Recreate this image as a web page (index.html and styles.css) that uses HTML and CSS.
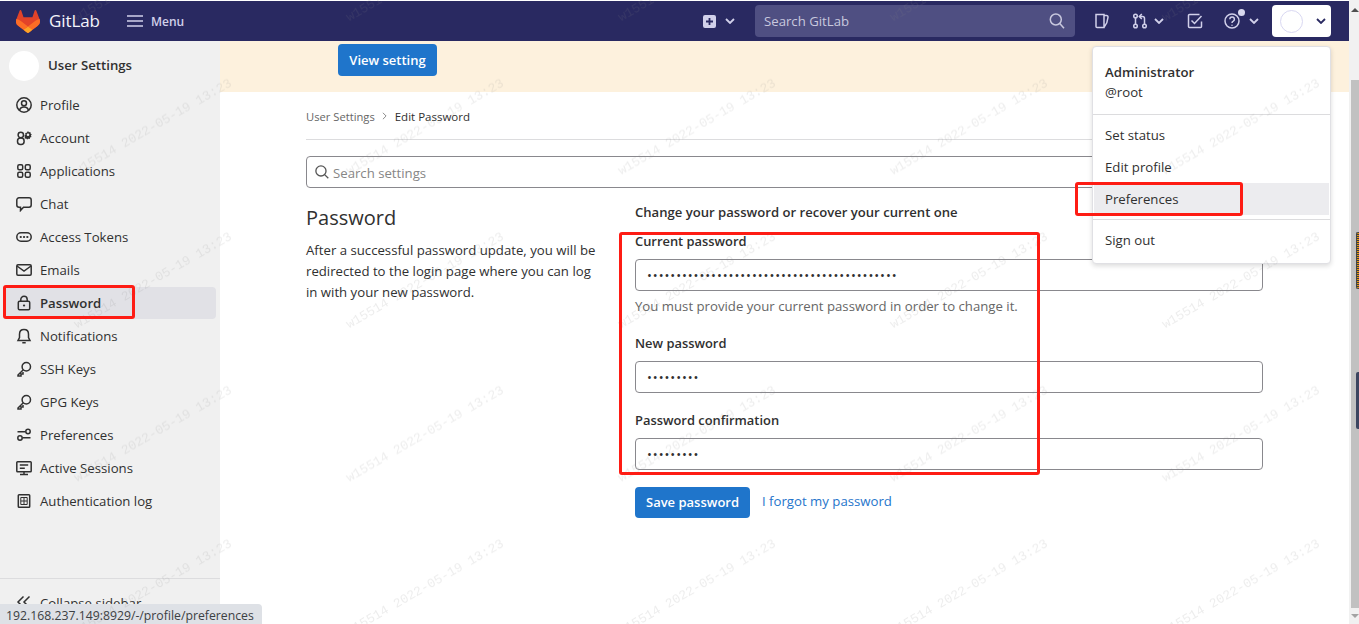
FILE: index.html
```html
<!DOCTYPE html>
<html lang="en">
<head>
<meta charset="utf-8">
<title>Edit Password · User Settings · GitLab</title>
<link rel="stylesheet" href="styles.css">
</head>
<body>
<div class="app">
  <div class="page">
    <header class="navbar">
      <div class="brand">
        <svg class="logo" viewBox="0 0 25 24"><path d="m24.507 9.5-.034-.09L21.082.562a.896.896 0 0 0-1.694.091l-2.29 7.01H7.825L5.535.653a.898.898 0 0 0-1.694-.09L.451 9.411.416 9.5a6.297 6.297 0 0 0 2.09 7.278l.012.01.03.022 5.16 3.867 2.56 1.935 1.554 1.176a1.051 1.051 0 0 0 1.268 0l1.555-1.176 2.56-1.935 5.197-3.89.014-.01A6.297 6.297 0 0 0 24.507 9.5Z" fill="#E24329"/><path d="M24.507 9.5l-.034-.09a11.44 11.44 0 0 0-4.56 2.051l-7.447 5.632 4.742 3.584 5.197-3.89.014-.01A6.297 6.297 0 0 0 24.507 9.5Z" fill="#FC6D26"/><path d="m7.707 20.677 2.56 1.935 1.555 1.176a1.051 1.051 0 0 0 1.268 0l1.555-1.176 2.56-1.935-4.743-3.584-4.755 3.584Z" fill="#FCA326"/><path d="M5.01 11.461a11.43 11.43 0 0 0-4.56-2.05L.416 9.5a6.297 6.297 0 0 0 2.09 7.278l.012.01.03.022 5.16 3.867 4.745-3.584-7.444-5.632Z" fill="#FC6D26"/></svg>
        <span class="wordmark">GitLab</span>
      </div>
      <div class="menu-btn">
        <svg class="ico" viewBox="0 0 16 16"><path d="M0 3h16M0 8h16M0 13h16"/></svg>
        <span>Menu</span>
      </div>
      <div class="nav-spacer"></div>
      <div class="nav-new">
        <svg class="ico-13" viewBox="0 0 13 13"><path class="solid" d="M2 0h9a2 2 0 0 1 2 2v9a2 2 0 0 1-2 2H2a2 2 0 0 1-2-2V2a2 2 0 0 1 2-2Zm3.600 3v2.600H3v1.800h2.600V10h1.800V7.400H10V5.600H7.400V3Z"/></svg>
        <svg class="chev" viewBox="0 0 10 6"><path d="M1 1l4 4 4-4"/></svg>
      </div>
      <div class="nav-search">
        <span>Search GitLab</span>
        <svg class="ico" viewBox="0 0 16 16"><circle cx="6.800" cy="6.500" r="5.500"/><path d="M10.800 10.500l4.200 4.800"/></svg>
      </div>
      <div class="nav-icons">
        <svg class="ico nav-issue" viewBox="0 0 16 16"><path d="M2 1.500h8v13H3a1 1 0 0 1-1-1ZM10 2.500h2.500a1.500 1.500 0 0 1 1.500 1.800l-1.200 5.500-2.800 4.500"/></svg>
        <div class="nav-mr">
          <svg class="ico" viewBox="0 0 16 16"><circle cx="3.500" cy="3" r="1.800"/><circle cx="3.500" cy="13" r="1.800"/><circle cx="12.500" cy="13" r="1.800"/><path d="M3.500 5v6M12.500 11V5.500a2 2 0 0 0-2-2H8M9.800 1L7.300 3.500 9.800 6"/></svg>
          <svg class="chev" viewBox="0 0 10 6"><path d="M1 1l4 4 4-4"/></svg>
        </div>
        <svg class="ico nav-todo" viewBox="0 0 16 16"><path d="M14.500 8.500v5a1 1 0 0 1-1 1h-11a1 1 0 0 1-1-1v-11a1 1 0 0 1 1-1h10"/><path d="M4.500 7.500l3 3 7-7.500"/></svg>
        <div class="nav-help">
          <svg class="ico" viewBox="0 0 16 16"><circle cx="8" cy="8" r="7"/><path d="M5.800 6.200a2.300 2.300 0 1 1 3.500 2c-.9.5-1.300 1-1.300 1.800"/><path d="M8 11.800v1"/></svg>
          <span class="help-dot"></span>
          <svg class="chev" viewBox="0 0 10 6"><path d="M1 1l4 4 4-4"/></svg>
        </div>
      </div>
      <div class="nav-user">
        <span class="nav-avatar"></span>
        <svg class="chev" viewBox="0 0 10 6"><path d="M1 1l4 4 4-4"/></svg>
      </div>
    </header>

    <div class="body">
      <aside class="sidebar">
        <div class="side-head"><span class="side-avatar"></span><span class="side-title">User Settings</span></div>
        <nav class="side-list">
          <a class="side-item"><svg class="ico" viewBox="0 0 16 16"><circle cx="8" cy="8" r="7.200"/><circle cx="8" cy="6.200" r="2.500"/><path d="M3.500 13.500c.5-2.500 2.200-3.500 4.500-3.500s4 1 4.500 3.500"/></svg><span>Profile</span></a>
          <a class="side-item"><svg class="ico" viewBox="0 0 16 16"><circle cx="4.800" cy="5" r="2.700"/><rect x="1.500" y="8" width="6.600" height="6.500" rx="3"/><path class="solid-path" d="M12 1l.9 1.200 1.500-.2.200 1.500 1.200.9-.9 1.100.6 1.400-1.400.6-.3 1.500-1.500-.3-1.100.9-1.100-1.100-1.400.2.100-1.500L8.500 5.500l1-1.100-.3-1.500 1.500-.2ZM12 3.500a1.300 1.300 0 1 0 0 2.600 1.300 1.300 0 0 0 0-2.600Z"/></svg><span>Account</span></a>
          <a class="side-item"><svg class="ico" viewBox="0 0 16 16"><rect x="1.800" y="1.800" width="4.900" height="4.900" rx="1.500"/><rect x="9.300" y="1.800" width="4.900" height="4.900" rx="1.500"/><rect x="1.800" y="9.300" width="4.900" height="4.900" rx="1.500"/><rect x="9.300" y="9.300" width="4.900" height="4.900" rx="1.500"/></svg><span>Applications</span></a>
          <a class="side-item"><svg class="ico" viewBox="0 0 16 16"><path d="M3 1.800h10a2.200 2.200 0 0 1 2.200 2.200v5A2.200 2.200 0 0 1 13 11.200H7.500L4.500 14.500v-3.300H3A2.200 2.200 0 0 1 .8 9V4A2.200 2.200 0 0 1 3 1.800Z"/></svg><span>Chat</span></a>
          <a class="side-item"><svg class="ico" viewBox="0 0 16 16"><rect x=".8" y="3.800" width="14.400" height="8.400" rx="4.200"/><path class="dots" d="M4.700 8h.1M8 8h.1M11.300 8h.1"/></svg><span>Access Tokens</span></a>
          <a class="side-item"><svg class="ico" viewBox="0 0 16 16"><rect x=".8" y="2.800" width="14.400" height="10.400" rx="1.200"/><path d="M1 4l7 5 7-5"/></svg><span>Emails</span></a>
          <a class="side-item active"><svg class="ico" viewBox="0 0 16 16"><rect x="2.300" y="6.300" width="11.400" height="8.400" rx="1.200"/><path d="M4.800 6V4.500a3.200 3.200 0 0 1 6.400 0V6"/><path class="dots" d="M8 10.500h.1"/></svg><span>Password</span></a>
          <a class="side-item"><svg class="ico" viewBox="0 0 16 16"><path d="M8 1.500c-2.800 0-4.500 2-4.500 4.700v3.300L2 12.500h12l-1.500-3V6.200c0-2.700-1.700-4.700-4.500-4.700ZM6.300 14.800h3.400"/></svg><span>Notifications</span></a>
          <a class="side-item"><svg class="ico" viewBox="0 0 16 16"><circle cx="10.300" cy="5.700" r="4.200"/><path d="M7.300 8.700L2 14v1h3v-2h2v-2"/></svg><span>SSH Keys</span></a>
          <a class="side-item"><svg class="ico" viewBox="0 0 16 16"><circle cx="10.300" cy="5.700" r="4.200"/><path d="M7.300 8.700L2 14v1h3v-2h2v-2"/></svg><span>GPG Keys</span></a>
          <a class="side-item"><svg class="ico" viewBox="0 0 16 16"><circle cx="12" cy="4.500" r="2.200"/><circle cx="4" cy="11" r="2.200"/><path d="M1.500 4.800h8M6.500 10.800h8"/></svg><span>Preferences</span></a>
          <a class="side-item"><svg class="ico" viewBox="0 0 16 16"><rect x=".8" y="1.800" width="14.400" height="10" rx=".8"/><path d="M3.800 5h8.400M3.800 8.200h5M8 12v2.500M4 14.500h8"/></svg><span>Active Sessions</span></a>
          <a class="side-item"><svg class="ico" viewBox="0 0 16 16"><rect x="2.300" y="1.800" width="11.400" height="12.400" rx=".8"/><path class="thin" d="M4.800 4.500h6.400v7H4.800ZM8 4.500v7M4.800 8h6.400"/></svg><span>Authentication log</span></a>
        </nav>
        <div class="side-collapse"><svg class="ico" viewBox="0 0 16 16"><path d="M7.500 2.500L2 8l5.500 5.500M13.500 2.500L8 8l5.500 5.500"/></svg><span>Collapse sidebar</span></div>
      </aside>

      <main class="main">
        <div class="banner"><button class="btn banner-btn">View setting</button></div>
        <div class="content">
          <div class="crumbs"><span class="crumb-link">User Settings</span><svg class="crumb-sep" viewBox="0 0 6 10"><path d="M1 1l4 4-4 4"/></svg><span class="crumb-here">Edit Password</span></div>
          <div class="settings-search">
            <svg class="ico" viewBox="0 0 16 16"><circle cx="6.800" cy="6.800" r="5.800"/><path d="M11 11l4.200 4.200"/></svg>
            <span>Search settings</span>
          </div>
          <div class="columns">
            <section class="intro">
              <h1>Password</h1>
              <p>After a successful password update, you will be redirected to the login page where you can log in with your new password.</p>
            </section>
            <form class="pw-form">
              <h2>Change your password or recover your current one</h2>
              <label class="lab lab-first">Current password</label>
              <input class="field" type="password" value="0123456789012345678901234567890123456789012">
              <p class="hint">You must provide your current password in order to change it.</p>
              <label class="lab lab-new">New password</label>
              <input class="field" type="password" value="012345678">
              <label class="lab lab-confirm">Password confirmation</label>
              <input class="field" type="password" value="012345678">
              <div class="actions">
                <button type="button" class="btn save-btn">Save password</button>
                <a class="forgot">I forgot my password</a>
              </div>
            </form>
          </div>
        </div>
      </main>
    </div>
  </div>

  <div class="scrollbar">
    <span class="arrow-up"></span>
    <div class="thumb"></div>
    <span class="arrow-down"></span>
    <span class="mark mark-orange"></span>
    <span class="mark mark-navy"></span>
  </div>

  <div class="dropdown">
    <div class="dd-user"><strong>Administrator</strong><span>@root</span></div>
    <div class="dd-group">
      <a class="dd-item">Set status</a>
      <a class="dd-item">Edit profile</a>
      <a class="dd-item dd-hover">Preferences</a>
    </div>
    <div class="dd-out"><a class="dd-item">Sign out</a></div>
  </div>

  <div class="status">192.168.237.149:8929/-/profile/preferences</div>

  <svg class="watermark" width="1359" height="624">
    <defs>
      <pattern id="wm" x="0" y="0" width="272" height="153.500" patternUnits="userSpaceOnUse">
        <text x="77" y="175" transform="rotate(-30 77 175)">w15514 2022-05-19 13:23</text>
        <text x="77" y="21.500" transform="rotate(-30 77 21.500)">w15514 2022-05-19 13:23</text>
      </pattern>
    </defs>
    <rect width="1349" height="624" fill="url(#wm)"/>
  </svg>

  <div class="mark-box box-side"></div>
  <div class="mark-box box-form"></div>
  <div class="mark-box box-pref"></div>
</div>
</body>
</html>
```
FILE: styles.css
```css
* { box-sizing: border-box; }
html, body { margin: 0; padding: 0; height: 100%; overflow: hidden; }
body { font-family: "Open Sans", "Liberation Sans", sans-serif; font-size: 13.2px; color: #303030; background: #fff; }
.app { position: relative; width: 1359px; height: 624px; display: flex; overflow: hidden; }
.page { flex: 1; display: flex; flex-direction: column; min-width: 0; }

svg { display: block; flex: none; }
.ico, .ico-13, .chev, .crumb-sep { fill: none; stroke: currentColor; stroke-width: 1.5; }
.ico { width: 16px; height: 16px; }
.ico-13 { width: 13px; height: 13px; stroke: none; }
.solid { fill: #d1d0ea; fill-rule: evenodd; }
.solid-path { fill: currentColor; stroke: none; fill-rule: evenodd; }
.dots { stroke-width: 2.200; stroke-linecap: round; }
.thin { stroke-width: 1; }
.chev { width: 10px; height: 6px; stroke-width: 1.800; }

.navbar { height: 40px; margin-top: 1px; flex: none; background: #292961; color: #d1d0ea; display: flex; align-items: center; }
.brand { display: flex; align-items: center; margin-left: 16px; width: 111px; }
.logo { width: 24px; height: 23px; }
.wordmark { margin-left: 9px; font-size: 17px; line-height: 20px; color: #f4f4fa; letter-spacing: -.1px; }
.menu-btn { display: flex; align-items: center; gap: 8px; font-size: 12px; font-weight: 600; }
.nav-spacer { flex: 1; }
.nav-new { display: flex; align-items: center; gap: 9px; margin-right: 20px; }
.nav-search { width: 320px; height: 32px; background: #4f4f82; border-radius: 4px; display: flex; align-items: center; justify-content: space-between; padding: 0 10px 0 9px; color: #c8c8de; }
.nav-icons { display: flex; align-items: center; margin-left: 19px; width: 178px; }
.nav-issue { margin-right: 22px; }
.nav-mr { display: flex; align-items: center; gap: 6px; margin-right: 23px; }
.nav-todo { margin-right: 21px; }
.nav-help { display: flex; align-items: center; gap: 9px; position: relative; }
.help-dot { position: absolute; left: 14px; top: -4px; width: 7px; height: 7px; border-radius: 50%; background: #d8d8ee; }
.nav-user { width: 59px; height: 32px; background: #fff; border-radius: 4px; display: flex; align-items: center; padding-left: 8px; gap: 13px; color: #292961; margin-right: 18px; }
.nav-avatar { width: 23px; height: 23px; border-radius: 50%; border: 1px solid #d9d8f2; }

.body { flex: 1; display: flex; min-height: 0; }
.sidebar { width: 220px; flex: none; background: #f0f0f0; display: flex; flex-direction: column; color: #303030; }
.side-head { height: 47px; margin-top: 1px; padding-left: 9px; display: flex; align-items: center; gap: 9px; font-weight: 600; }
.side-title { margin-bottom: 2px; }
.side-avatar { width: 30px; height: 30px; border-radius: 50%; background: #fff; }
.side-list { padding: 0 4px; flex: 1; display: flex; flex-direction: column; gap: 1px; margin-top: 0; }
.side-item { height: 32px; padding-left: 12px; display: flex; align-items: center; gap: 8px; border-radius: 4px; }
.side-item.active { background: #e1e1e6; font-weight: 600; }
.side-collapse { height: 46px; flex: none; border-top: 1px solid #dcdcde; padding: 15px 0 0 16px; display: flex; align-items: flex-start; gap: 8px; }

.main { flex: 1; min-width: 0; }
.banner { height: 51px; background: #fdf1dd; padding: 3px 0 0 118px; }
.btn { border: 0; border-radius: 4px; background: #1f75cb; color: #fff; font: 600 13px "Open Sans", "Liberation Sans", sans-serif; padding: 0; }
.banner-btn { width: 99px; height: 32px; }
.content { padding: 0 86px; }
.crumbs { height: 48px; padding-top: 1px; display: flex; align-items: center; font-size: 11.5px; border-bottom: 1px solid #dcdcde; }
.crumb-link { color: #666; font-size: 11.2px; }
.crumb-sep { width: 5px; height: 8px; margin: 0 8px 0 7px; color: #888; stroke-width: 1.200; }
.crumb-here { color: #303030; font-weight: 500; }
.settings-search { margin-top: 16px; height: 32px; border: 1px solid #89888d; border-radius: 4px; display: flex; align-items: center; gap: 4px; padding-left: 8px; color: #868686; }
.settings-search .ico { color: #555; width: 14px; height: 14px; }
.settings-search span { margin-top: 1px; }
.columns { display: flex; margin-top: 15px; }
.intro { width: 329px; flex: none; padding: 2px 38px 0 0; }
.intro h1 { margin: 0 0 9px; font-size: 20px; line-height: 26px; font-weight: 500; color: #303030; }
.intro p { margin: 0; line-height: 21px; color: #303030; }
.pw-form { flex: 1; min-width: 0; }
.pw-form h2 { margin: 0; font-size: 13.1px; line-height: 18px; font-weight: 600; }
.lab { display: block; font-weight: 600; font-size: 12.9px; line-height: 18px; }
.lab-first { margin-top: 11px; margin-bottom: 9px; }
.lab-new { margin-top: 19px; margin-bottom: 9px; }
.lab-confirm { margin-top: 18px; margin-bottom: 9px; }
.field { display: block; width: 100%; height: 32px; border: 1px solid #89888d; border-radius: 4px; padding: 0 12px 0 11px; font: 13px "Open Sans", sans-serif; color: #303030; letter-spacing: .94px; outline: 0; background: #fff; }
.hint { margin: 6px 0 0; line-height: 18px; color: #666; }
.actions { margin-top: 17px; display: flex; align-items: center; gap: 12px; }
.save-btn { width: 115px; height: 31px; padding-bottom: 2px; }
.forgot { color: #1f75cb; margin-bottom: 3px; }

.scrollbar { width: 10px; flex: none; background: #f1f1f1; position: relative; padding-top: 80px; }
.thumb { margin-left: 2px; height: 528px; background: #c1c1c1; }
.arrow-up, .arrow-down { position: absolute; left: 2px; width: 0; height: 0; border-left: 4px solid transparent; border-right: 4px solid transparent; }
.arrow-up { top: 8px; border-bottom: 4px solid #505050; }
.arrow-down { bottom: 6px; border-top: 4px solid #a3a3a3; }
.mark { position: absolute; left: 7px; right: 0; border-radius: 2px 0 0 2px; }
.mark-orange { top: 232px; height: 57px; background: repeating-linear-gradient(#e8990f 0 1px, #3a3a3a 1px 2px); border: 1px solid #444; border-right: 0; }
.mark-navy { top: 372px; height: 57px; background: #3c4560; }

.dropdown { position: absolute; left: 1092px; top: 46px; width: 239px; height: 218px; background: #fff; border: 1px solid #e0e0e4; border-radius: 4px; box-shadow: 0 2px 5px rgba(0,0,0,.14); display: flex; flex-direction: column; }
.dd-user { height: 68px; padding: 16px 12px 0; display: flex; flex-direction: column; gap: 2px; line-height: 18px; border-bottom: 1px solid #dcdcde; }
.dd-user strong { font-weight: 600; }
.dd-group { padding: 4px 1px 4px; border-bottom: 1px solid #dcdcde; display: flex; flex-direction: column; }
.dd-item { height: 32px; display: flex; align-items: center; padding-left: 11px; }
.dd-hover { background: #ececef; }
.dd-out { padding: 4px 1px; }

.status { position: absolute; left: 0; bottom: 0; width: 262px; height: 20px; padding: 2px 0 0 6px; background: #dee1e6; border-top-right-radius: 4px; font-size: 12.25px; line-height: 20px; color: #3c4043; white-space: nowrap; overflow: hidden; }
.watermark { position: absolute; left: 0; top: 0; pointer-events: none; }
.watermark text { font: 13px "Liberation Mono", monospace; fill: rgba(130,130,130,.14); }
.mark-box { position: absolute; border: 3px solid #fe1c14; border-radius: 3px; pointer-events: none; }
.box-side { left: 3px; top: 285px; width: 132px; height: 34px; }
.box-form { left: 619px; top: 232px; width: 421px; height: 243px; }
.box-pref { left: 1075px; top: 182px; width: 168px; height: 34px; }
```
